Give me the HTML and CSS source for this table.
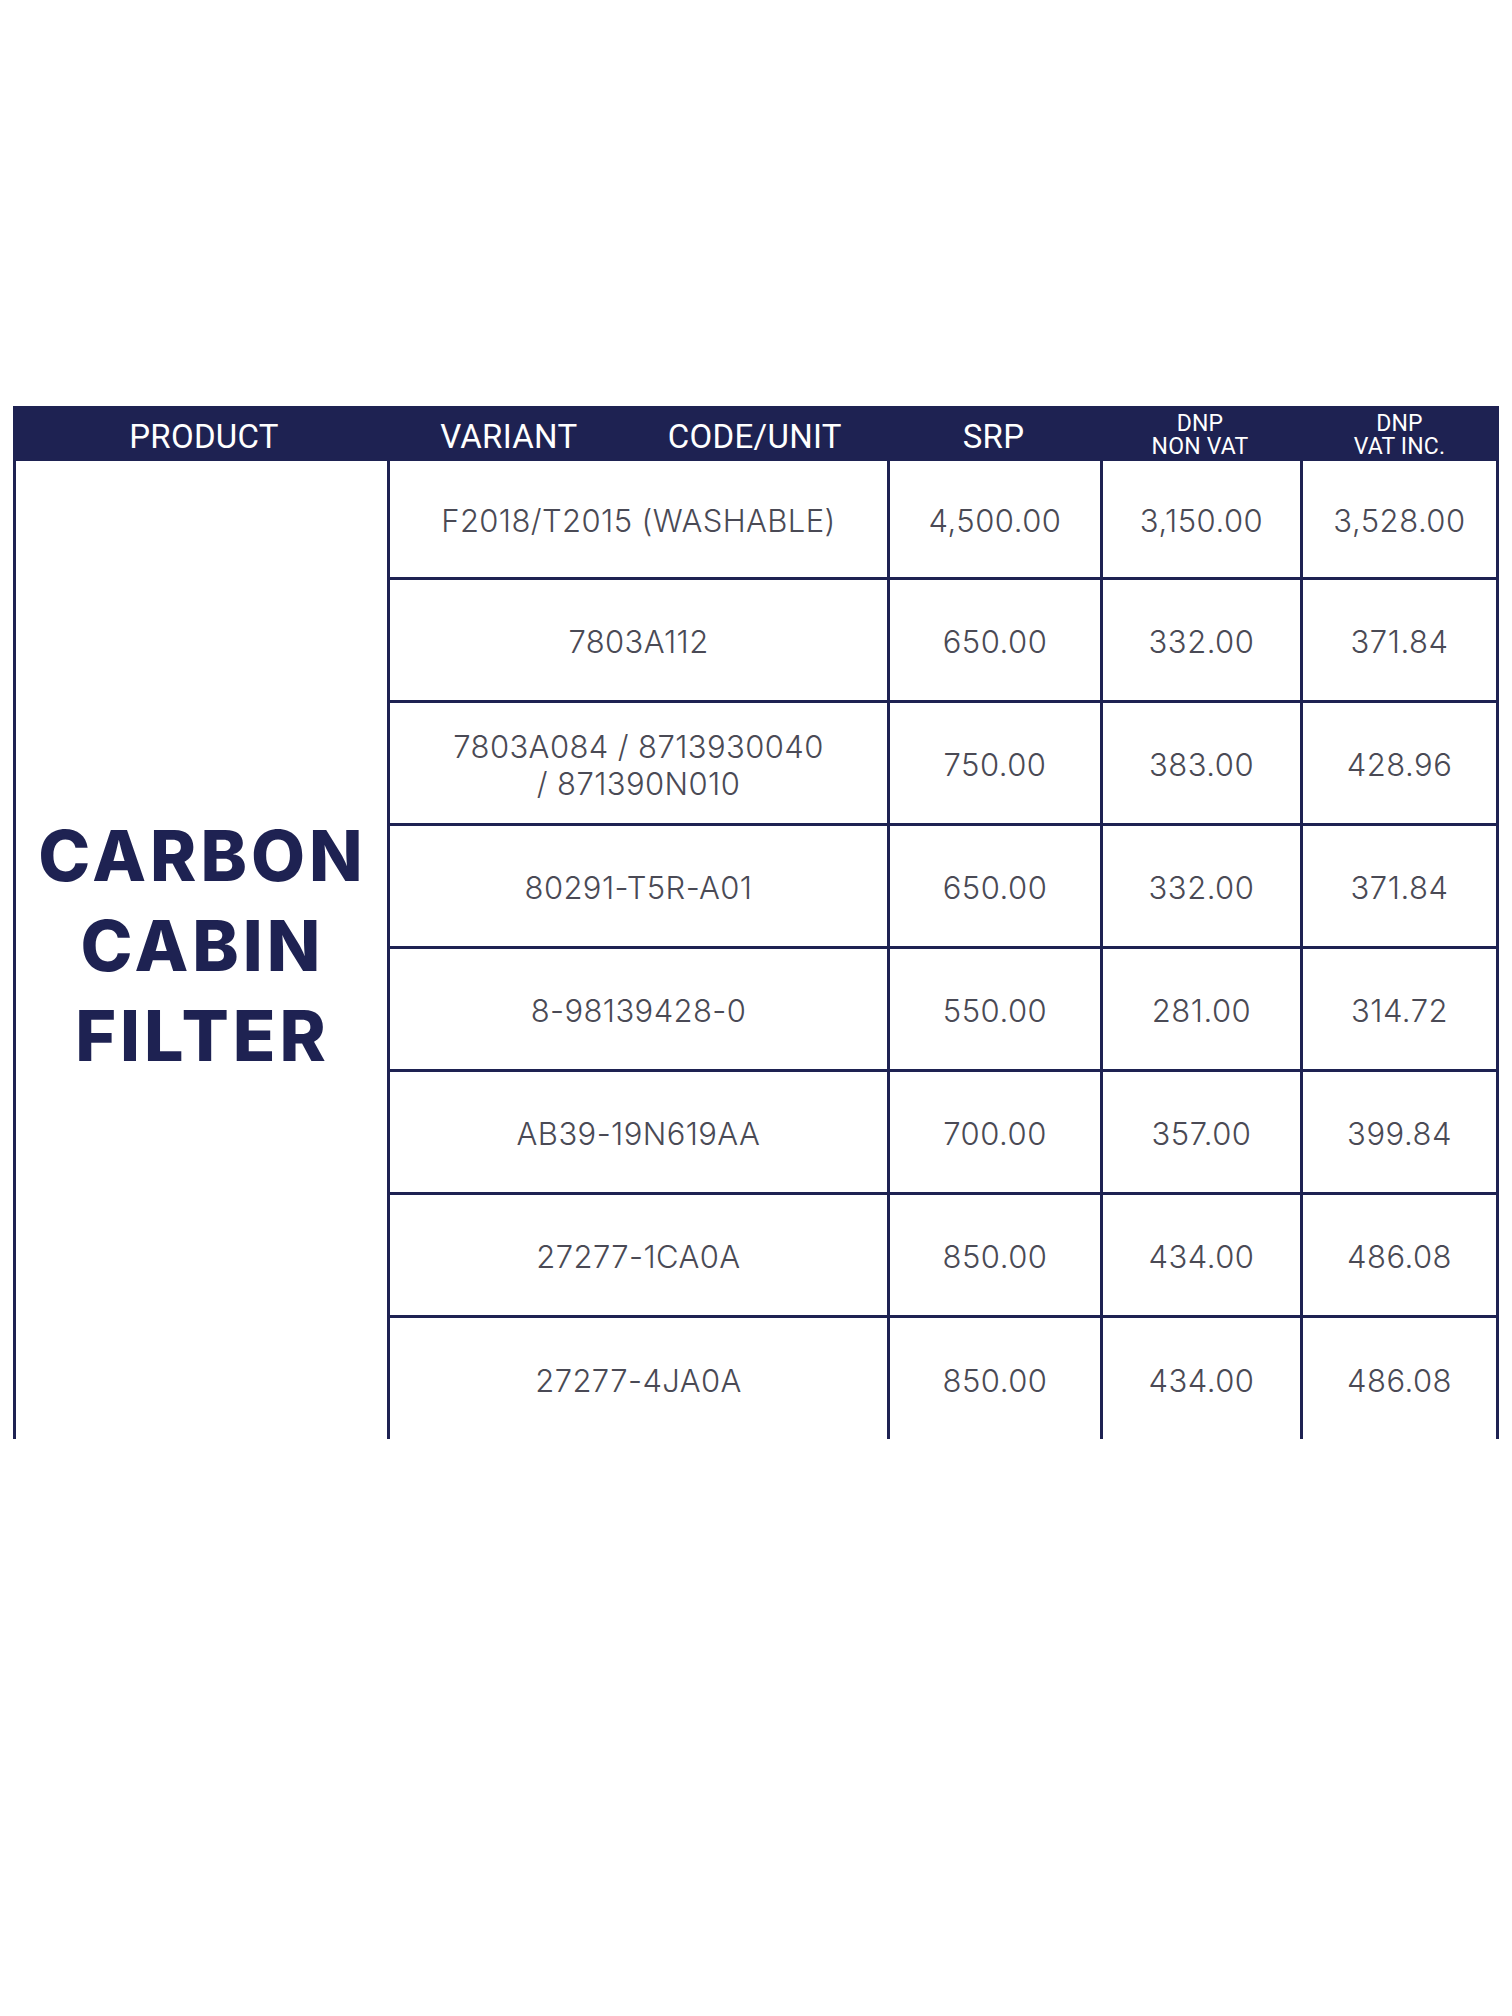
FILE: index.html
```html
<!DOCTYPE html>
<html>
<head>
<meta charset="utf-8">
<link rel="stylesheet" href="styles.css">
</head>
<body>
<div class="sheet">
  <div class="head">
    <div class="h h-product">PRODUCT</div>
    <div class="h h-variant"><span>VARIANT</span><span>CODE/UNIT</span></div>
    <div class="h">SRP</div>
    <div class="h h-small">DNP<br>NON VAT</div>
    <div class="h h-small">DNP<br>VAT INC.</div>
  </div>
  <div class="body">
    <div class="product"><span>CARBON<br>CABIN<br>FILTER</span></div>

    <div class="c code">F2018/T2015 (WASHABLE)</div>
    <div class="c">4,500.00</div>
    <div class="c">3,150.00</div>
    <div class="c last">3,528.00</div>

    <div class="c code">7803A112</div>
    <div class="c">650.00</div>
    <div class="c">332.00</div>
    <div class="c last">371.84</div>

    <div class="c code two">7803A084 / 8713930040<br>/ 871390N010</div>
    <div class="c">750.00</div>
    <div class="c">383.00</div>
    <div class="c last">428.96</div>

    <div class="c code">80291-T5R-A01</div>
    <div class="c">650.00</div>
    <div class="c">332.00</div>
    <div class="c last">371.84</div>

    <div class="c code">8-98139428-0</div>
    <div class="c">550.00</div>
    <div class="c">281.00</div>
    <div class="c last">314.72</div>

    <div class="c code">AB39-19N619AA</div>
    <div class="c">700.00</div>
    <div class="c">357.00</div>
    <div class="c last">399.84</div>

    <div class="c code">27277-1CA0A</div>
    <div class="c">850.00</div>
    <div class="c">434.00</div>
    <div class="c last">486.08</div>

    <div class="c code end">27277-4JA0A</div>
    <div class="c end">850.00</div>
    <div class="c end">434.00</div>
    <div class="c last end">486.08</div>
  </div>
</div>
</body>
</html>
```
FILE: styles.css
```css
html, body {
  margin: 0;
  padding: 0;
  background: #ffffff;
}
body {
  width: 1512px;
  height: 2016px;
  font-family: "Inter", "Lato", sans-serif;
}
.sheet {
  margin-top: 406px;
  margin-left: 13px;
  width: 1486px;
}
.head {
  display: grid;
  grid-template-columns: 374px 500px 213px 200px 199px;
  height: 55px;
  background: #1e2252;
  color: #ffffff;
  font-family: "Roboto", sans-serif;
}
.h {
  display: flex;
  align-items: center;
  justify-content: center;
  font-size: 33px;
  letter-spacing: 0.3px;
  padding-top: 6px;
  box-sizing: border-box;
}
.h-product {
  padding-left: 8px;
}
.h-variant {
  justify-content: space-around;
  padding-left: 8px;
}
.h-small {
  font-size: 23px;
  line-height: 23px;
  letter-spacing: 0.2px;
  text-align: center;
  padding-top: 3px;
}
.body {
  display: grid;
  grid-template-columns: 374px 500px 213px 200px 199px;
  grid-template-rows: 119px repeat(6, 123px) 121px;
  width: 1486px;
}
.product {
  grid-row: 1 / span 8;
  border-left: 3px solid #1e2252;
  display: flex;
  align-items: center;
  justify-content: center;
  padding-bottom: 8px;
  padding-left: 2px;
  box-sizing: border-box;
}
.product span {
  font-family: "Inter", sans-serif;
  font-weight: 800;
  font-size: 70px;
  line-height: 90px;
  letter-spacing: 4px;
  color: #1e2252;
  text-align: center;
}
.c {
  border-left: 3px solid #1e2252;
  border-bottom: 3px solid #1e2252;
  box-sizing: border-box;
  display: flex;
  align-items: center;
  justify-content: center;
  text-align: center;
  font-size: 31px;
  font-weight: 300;
  color: #4a4a55;
  letter-spacing: 0.5px;
  padding-top: 3px;
}
.code {
  letter-spacing: 0.4px;
}
.two {
  line-height: 37px;
}
.last {
  border-right: 3px solid #1e2252;
}
.end {
  border-bottom: none;
}
```
